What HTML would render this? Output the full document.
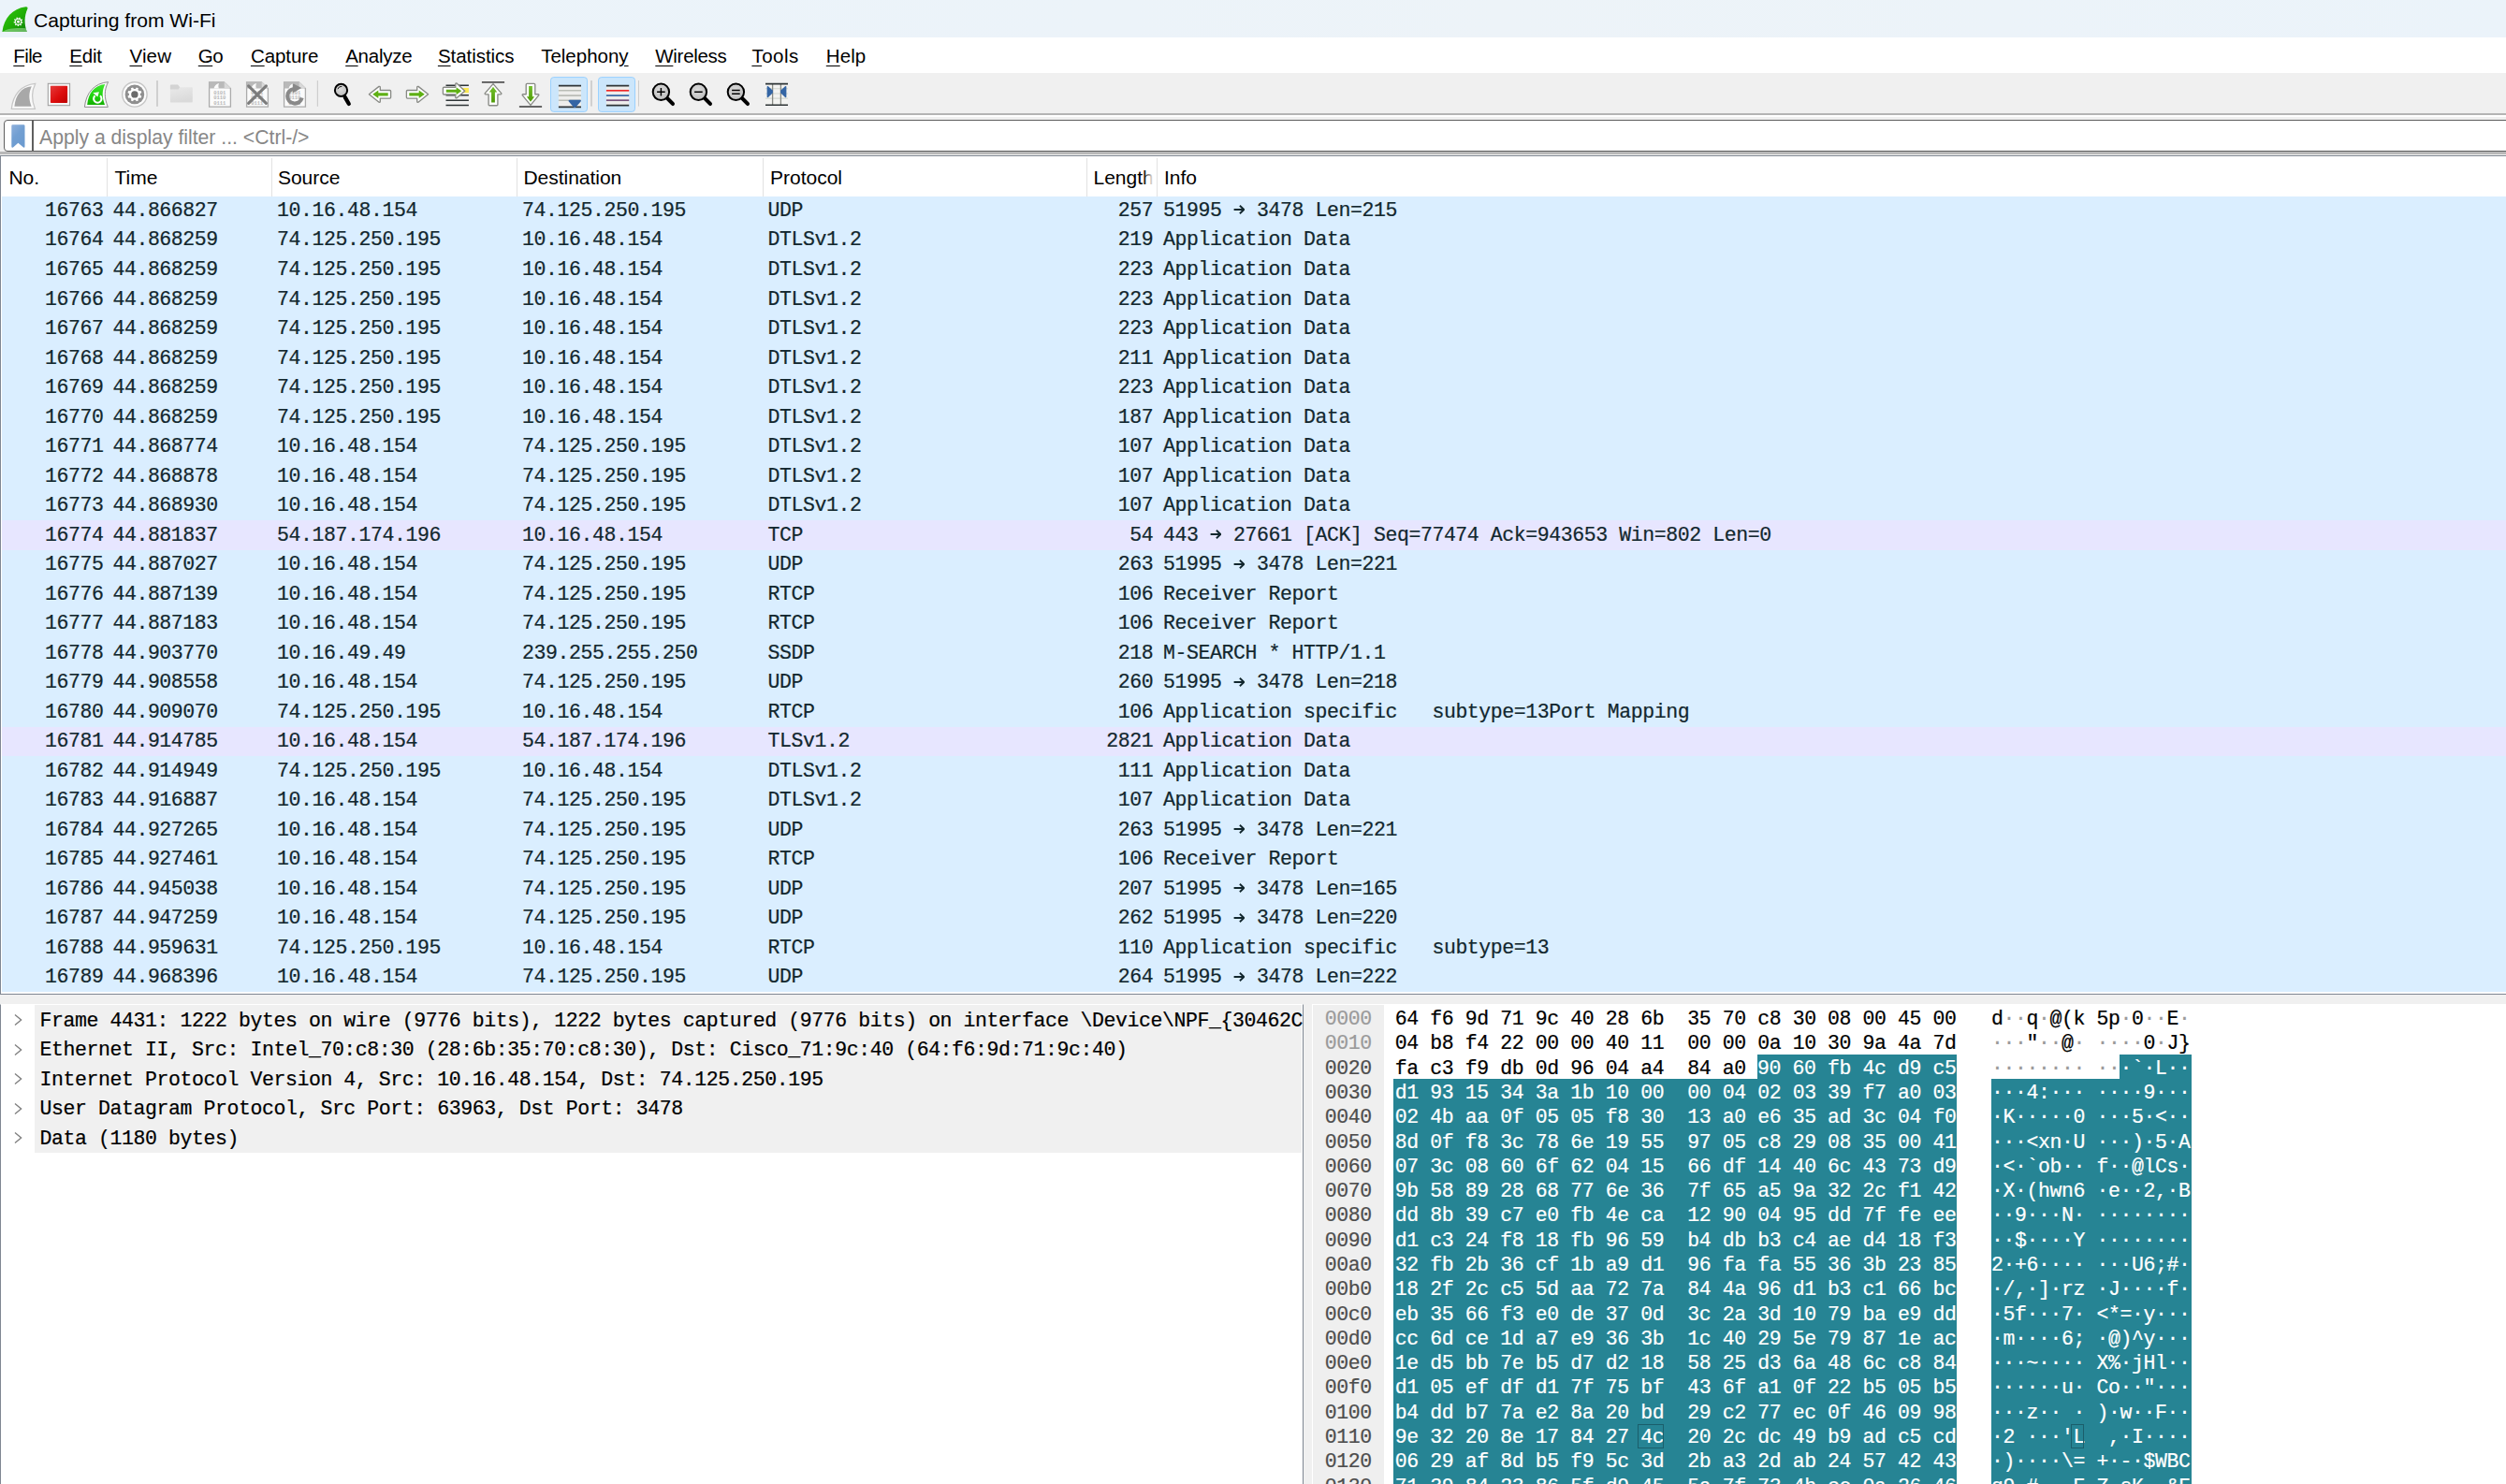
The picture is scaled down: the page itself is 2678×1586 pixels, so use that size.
<!DOCTYPE html><html><head><meta charset='utf-8'><title>Capturing from Wi-Fi</title><style>
*{box-sizing:border-box}
html,body{margin:0;padding:0}
body{width:2678px;height:1586px;overflow:hidden;background:#fff;position:relative;font-family:"Liberation Sans",sans-serif;color:#000}
.abs{position:absolute}
.mono{font-family:"Liberation Mono",monospace;font-size:21.5px;letter-spacing:-0.407px;white-space:pre;-webkit-text-stroke:0.22px}
.ui{font-family:"Liberation Sans",sans-serif;white-space:pre}
#title{left:0;top:0;width:2678px;height:40px;background:linear-gradient(90deg,#ebf3fa 0%,#ecf3f9 45%,#edf3f8 60%,#ebf3fa 100%)}
#menu{left:0;top:40px;width:2678px;height:38px;background:#fff}
#tb{left:0;top:78px;width:2678px;height:43px;background:#f0f0f0}
.mi{position:absolute;top:0.6px;height:38px;line-height:38px;font-size:20.5px;color:#000}
.mi u{text-decoration:underline;text-decoration-thickness:1.2px;text-underline-offset:2.6px}
.row{position:absolute;left:2px;width:2678px;height:31.6px;color:#12272e}
.row span{position:absolute;top:0.2px;height:31.5px;line-height:31.5px}
.udp{background:#daeeff}
.tcp{background:#e7e6ff}
.hrow{position:absolute;left:0;height:26.28px;line-height:26.28px;margin-top:1.9px}
</style></head><body>
<div id='title' class='abs'></div>
<svg class='abs' style='left:0;top:0' width='40' height='40' viewBox='0 0 40 40'><defs><linearGradient id='ag' x1='0' y1='0' x2='1' y2='1'><stop offset='0' stop-color='#35c80e'/><stop offset='0.55' stop-color='#1fae06'/><stop offset='1' stop-color='#0b7d08'/></linearGradient></defs><path d='M2.4 33.9 C4.5 19 13 9.2 27.6 7.2 Q30 7.1 29.4 9.4 C26 17 25.6 25 28.8 33.9 Z' fill='url(#ag)'/><path d='M2.4 33.9 C9 29.6 20 29.6 27.6 30.2 L28.8 33.9Z' fill='#9fd89a' opacity='0.6'/><path d='M23.20 23.17 L24.39 23.54 L24.13 24.79 L22.89 24.67 L22.36 25.55 L23.03 26.60 L22.03 27.40 L21.15 26.51 L20.18 26.84 L20.02 28.07 L18.74 28.04 L18.64 26.80 L17.68 26.42 L16.76 27.26 L15.80 26.42 L16.53 25.40 L16.04 24.50 L14.79 24.55 L14.60 23.29 L15.81 22.98 L16.01 21.97 L15.02 21.21 L15.69 20.12 L16.81 20.66 L17.62 20.01 L17.35 18.80 L18.56 18.39 L19.08 19.52 L20.11 19.55 L20.68 18.44 L21.87 18.91 L21.54 20.11 L22.31 20.80 L23.46 20.32 L24.07 21.44 L23.05 22.15Z' fill='#f4fbf2'/><circle cx='19.5' cy='23.2' r='2.55' fill='#28a018'/><circle cx='19.5' cy='23.2' r='1.45' fill='#fff'/></svg>
<div class='abs ui' style='left:36px;top:0.6px;height:40px;line-height:42px;font-size:21.1px;color:#000'>Capturing from Wi-Fi</div>
<div id='menu' class='abs'>
<div class='mi ui' style='left:14.3px;letter-spacing:-0.63px'><u>F</u>ile</div>
<div class='mi ui' style='left:74.3px;letter-spacing:-0.23px'><u>E</u>dit</div>
<div class='mi ui' style='left:138.5px;letter-spacing:0.13px'><u>V</u>iew</div>
<div class='mi ui' style='left:211.8px;letter-spacing:-0.57px'><u>G</u>o</div>
<div class='mi ui' style='left:267.9px;letter-spacing:-0.06px'><u>C</u>apture</div>
<div class='mi ui' style='left:369.2px;letter-spacing:-0.26px'><u>A</u>nalyze</div>
<div class='mi ui' style='left:467.9px;letter-spacing:-0.04px'><u>S</u>tatistics</div>
<div class='mi ui' style='left:578.2px;letter-spacing:-0.01px'>Telephon<u>y</u></div>
<div class='mi ui' style='left:700.3px;letter-spacing:-0.30px'><u>W</u>ireless</div>
<div class='mi ui' style='left:803.4px;letter-spacing:0.49px'><u>T</u>ools</div>
<div class='mi ui' style='left:882.8px;letter-spacing:0.08px'><u>H</u>elp</div>
</div>
<div id='tb' class='abs'></div>
<div class='abs' style='left:0;top:121px;width:2678px;height:2px;background:#b4b4b4'></div>
<div class='abs' style='left:0;top:123px;width:2678px;height:2.2px;background:#fff'></div>
<div class='abs' style='left:0;top:125.2px;width:2678px;height:41.3px;background:#f0f0f0'></div>
<svg class='abs' style='left:0;top:78px' width='900' height='46' viewBox='0 78 900 46'><defs>
<radialGradient id='lens' cx='0.45' cy='0.4' r='0.7'><stop offset='0' stop-color='#dcdcdc'/><stop offset='1' stop-color='#b8b8b8'/></radialGradient>
<linearGradient id='red' x1='0' y1='0' x2='1' y2='1'><stop offset='0' stop-color='#e53a3a'/><stop offset='0.55' stop-color='#dc0d0d'/><stop offset='1' stop-color='#bd0000'/></linearGradient>
<linearGradient id='grn' x1='0' y1='0' x2='0' y2='1'><stop offset='0' stop-color='#3fe52e'/><stop offset='0.6' stop-color='#1ed20c'/><stop offset='1' stop-color='#14ae02'/></linearGradient>
<linearGradient id='fold' x1='0' y1='0' x2='0.3' y2='1'><stop offset='0' stop-color='#ececec'/><stop offset='1' stop-color='#dadada'/></linearGradient>
<linearGradient id='ga' x1='0' y1='0' x2='0' y2='1'><stop offset='0' stop-color='#73c02a'/><stop offset='1' stop-color='#4e9a06'/></linearGradient>
</defs><path d='M12.30 116.40 C13.82 101.28 22.46 90.75 37.70 89.40 C33.26 98.31 33.26 106.14 37.45 116.40 Z' fill='#fafafa' stroke='#c6c6c6' stroke-width='1.2'/><path d='M15.40 113.70 C16.50 101.66 22.76 93.28 33.80 92.20 C30.58 99.30 30.58 105.53 33.62 113.70 Z' fill='#a8a8a8'/><rect x='51.3' y='89.3' width='23.3' height='23.4' fill='#f6f6f6' stroke='#9c9c9c' stroke-width='1'/><rect x='53.9' y='91.8' width='18.2' height='18.2' rx='0.8' fill='url(#red)'/><path d='M90.40 114.40 C91.91 99.39 100.48 88.94 115.60 87.60 C111.19 96.44 111.19 104.22 115.35 114.40 Z' fill='#fbfbfb' stroke='#8e8e8e' stroke-width='1'/><path d='M93.20 111.90 C94.34 99.64 100.80 91.09 112.20 90.00 C108.88 97.23 108.88 103.58 112.01 111.90 Z' fill='url(#grn)'/><path d='M107.0 102.3 A4.2 4.2 0 1 1 101.6 102.3' fill='none' stroke='#fff' stroke-width='2.1'/><path d='M99.4 99.3 L105.9 98.2 L104.3 103.4 Z' fill='#fff'/><circle cx='143.9' cy='100.9' r='13.2' fill='#fdfdfd' stroke='#c6c6c6' stroke-width='1.4'/><circle cx='143.9' cy='100.9' r='10.3' fill='#8f8f8f'/><path d='M149.83 101.84 L151.37 102.77 L150.50 104.86 L148.75 104.43 L147.43 105.75 L147.86 107.50 L145.77 108.37 L144.84 106.83 L142.96 106.83 L142.03 108.37 L139.94 107.50 L140.37 105.75 L139.05 104.43 L137.30 104.86 L136.43 102.77 L137.97 101.84 L137.97 99.96 L136.43 99.03 L137.30 96.94 L139.05 97.37 L140.37 96.05 L139.94 94.30 L142.03 93.43 L142.96 94.97 L144.84 94.97 L145.77 93.43 L147.86 94.30 L147.43 96.05 L148.75 97.37 L150.50 96.94 L151.37 99.03 L149.83 99.96Z' fill='#fff'/><circle cx='143.9' cy='100.9' r='3.7' fill='#6b6b6b'/><rect x='167' y='86.1' width='2' height='27.7' fill='#cfcfcf'/><path d='M181.9 91.4 Q181.9 90.4 182.9 90.4 H190 L192.2 93.3 H205 Q205.8 93.3 205.8 94.1 V108.7 Q205.8 109.5 205 109.5 H182.7 Q181.9 109.5 181.9 108.7 Z' fill='url(#fold)'/><path d='M181.9 91.4 Q181.9 90.4 182.9 90.4 H190 L192.2 93.3 L190.5 95.4 H181.9 Z' fill='#d3d3d3'/><path d='M223.6 87.8 H239.5 L246.4 94.6 V114.2 H223.6 Z' fill='#fbfbfb' stroke='#ababab' stroke-width='1.3'/><path d='M223.5 87.7 H239.5 L246.5 94.6 H223.5 Z' fill='#b9b9b9'/><path d='M239.7 87.6 V94.2 H246.6 Z' fill='#d9d9d9'/><path d='M228.5 94.6 C229.3 91.5 231 89.6 234 88.9 C233.2 91 233.2 92.8 233.9 94.6 Z' fill='#fbfbfb'/><text x='228.2' y='101.2' font-family='Liberation Mono, monospace' font-size='5.5' font-weight='bold' fill='#b9b9b9' textLength='13.2'>0101</text><text x='228.2' y='106.3' font-family='Liberation Mono, monospace' font-size='5.5' font-weight='bold' fill='#b9b9b9' textLength='13.2'>0110</text><text x='228.2' y='111.5' font-family='Liberation Mono, monospace' font-size='5.5' font-weight='bold' fill='#b9b9b9' textLength='13.2'>0111</text><path d='M263.6 87.8 H279.5 L286.4 94.6 V114.2 H263.6 Z' fill='#fbfbfb' stroke='#ababab' stroke-width='1.3'/><path d='M263.5 87.7 H279.5 L286.5 94.6 H263.5 Z' fill='#b9b9b9'/><path d='M279.7 87.6 V94.2 H286.6 Z' fill='#d9d9d9'/><path d='M268.5 94.6 C269.3 91.5 271 89.6 274 88.9 C273.2 91 273.2 92.8 273.9 94.6 Z' fill='#fbfbfb'/><text x='268.2' y='101.2' font-family='Liberation Mono, monospace' font-size='5.5' font-weight='bold' fill='#b9b9b9' textLength='13.2'>0101</text><text x='268.2' y='106.3' font-family='Liberation Mono, monospace' font-size='5.5' font-weight='bold' fill='#b9b9b9' textLength='13.2'>0110</text><text x='268.2' y='111.5' font-family='Liberation Mono, monospace' font-size='5.5' font-weight='bold' fill='#b9b9b9' textLength='13.2'>0111</text><path d='M265.6 91.8 L284.4 110.4 M284.4 91.8 L265.6 110.4' stroke='#7c7c7c' stroke-width='3.1' stroke-linecap='round'/><path d='M303.6 87.8 H319.5 L326.4 94.6 V114.2 H303.6 Z' fill='#fbfbfb' stroke='#ababab' stroke-width='1.3'/><path d='M303.5 87.7 H319.5 L326.5 94.6 H303.5 Z' fill='#b9b9b9'/><path d='M319.7 87.6 V94.2 H326.6 Z' fill='#d9d9d9'/><path d='M308.5 94.6 C309.3 91.5 311 89.6 314 88.9 C313.2 91 313.2 92.8 313.9 94.6 Z' fill='#fbfbfb'/><text x='308.2' y='101.2' font-family='Liberation Mono, monospace' font-size='5.5' font-weight='bold' fill='#b9b9b9' textLength='13.2'>0101</text><text x='308.2' y='106.3' font-family='Liberation Mono, monospace' font-size='5.5' font-weight='bold' fill='#b9b9b9' textLength='13.2'>0110</text><text x='308.2' y='111.5' font-family='Liberation Mono, monospace' font-size='5.5' font-weight='bold' fill='#b9b9b9' textLength='13.2'>0111</text><path d='M314.2 95.0 A7.8 7.8 0 1 0 322.6 104.6' fill='none' stroke='#898989' stroke-width='4.2'/><path d='M312.8 88.9 L322.2 93.9 L312.8 99.4 Z' fill='#898989'/><rect x='338.8' y='86.1' width='1.1' height='27.7' fill='#cacaca'/><line x1='368.7' y1='103.9' x2='372.8' y2='111.0' stroke='#000' stroke-width='4.2' stroke-linecap='round'/><circle cx='364.5' cy='96.4' r='6.6' fill='url(#lens)' stroke='#000' stroke-width='2'/><path d='M360.9 95.2 A4.2 4.2 0 0 1 365.3 92.4' stroke='#000' stroke-width='0.9' fill='none'/><path d='M394.4 100.8 L405 92.4 Q406.3 92 406.3 93.4 V96.5 H416.6 Q417.6 96.5 417.6 97.5 V104.1 Q417.6 105.1 416.6 105.1 H406.3 V108.2 Q406.3 109.6 405 109.2 Z' fill='#fff' stroke='#888a85' stroke-width='1.35' stroke-linejoin='round'/><path d='M398.2 100.8 L404.3 96.6 V99.2 H414.7 V102.5 H404.3 V105.0 Z' fill='#5fb014'/><path d='M457.6 100.8 L447 92.4 Q445.7 92 445.7 93.4 V96.5 H435.4 Q434.4 96.5 434.4 97.5 V104.1 Q434.4 105.1 435.4 105.1 H445.7 V108.2 Q445.7 109.6 447 109.2 Z' fill='#fff' stroke='#888a85' stroke-width='1.35' stroke-linejoin='round'/><path d='M453.8 100.8 L447.7 96.6 V99.2 H437.3 V102.5 H447.7 V105.0 Z' fill='#5fb014'/><g stroke='#2e3436' stroke-width='1.6'><path d='M476.5 91.3H500.9M476.5 101.8H500.9M476.5 107.2H500.9M476.5 112.5H500.9'/></g><rect x='493' y='94' width='7.9' height='5.2' fill='#fce94f'/><path d='M496.7 97.2 L488 89.0 Q486.8 88.6 486.8 89.9 V93.2 H474.4 Q473.4 93.2 473.4 94.2 V100.0 Q473.4 101.0 474.4 101.0 H486.8 V104.0 Q486.8 105.2 488 104.8 Z' fill='#fff' stroke='#888a85' stroke-width='1.35' stroke-linejoin='round'/><path d='M493.2 97.2 L487.6 93.2 V95.7 H476.8 V98.8 H487.6 V101.2 Z' fill='#5fb014'/><path d='M514.9 87.9H539.1' stroke='#444' stroke-width='1.6'/><path d='M527 89.6 L535.7 99.6 Q536.2 100.8 535 100.8 H531.9 V111.7 Q531.9 112.7 530.9 112.7 H523.1 Q522.1 112.7 522.1 111.7 V100.8 H519 Q517.8 100.8 518.3 99.6 Z' fill='#fff' stroke='#888a85' stroke-width='1.35' stroke-linejoin='round'/><path d='M527 92.8 L531.2 98.6 H528.9 V109.5 H525.1 V98.6 H522.8 Z' fill='url(#ga)'/><path d='M554.9 114H579.1' stroke='#444' stroke-width='1.6'/><path d='M567 112.4 L575.7 101.9 Q576.2 100.7 575 100.7 H571.8 V90.4 Q571.8 89.4 570.8 89.4 H563.2 Q562.2 89.4 562.2 90.4 V100.7 H559 Q557.8 100.7 558.3 101.9 Z' fill='#fff' stroke='#888a85' stroke-width='1.35' stroke-linejoin='round'/><path d='M567 108.8 L571.2 103.3 H568.9 V92 H565.1 V103.3 H562.8 Z' fill='url(#ga)'/><rect x='588.5' y='82.6' width='39' height='36.8' rx='3.2' fill='#cce6fb' stroke='#99d1ff' stroke-width='1'/><rect x='596.9' y='91.6' width='24.1' height='22.8' fill='#eeeeec'/><g stroke-width='1.6'><path d='M596.9 91.6H621M596.9 114.4H621' stroke='#2e3436'/><path d='M596.9 96.8H621M596.9 102.1H621M596.9 107.2H621' stroke='#babdb6'/></g><path d='M608.6 106.8 H619.8 Q621.6 106.8 620.6 108.4 L615.4 114.4 Q614.2 115.4 613 114.4 L607.8 108.4 Q606.8 106.8 608.6 106.8Z' fill='#3465a4'/><rect x='631.1' y='86' width='1.8' height='27.6' fill='#cdcdcd'/><rect x='639.5' y='82.6' width='39' height='36.8' rx='3.2' fill='#cce6fb' stroke='#99d1ff' stroke-width='1'/><rect x='647.9' y='91.6' width='24.3' height='21.1' fill='#eeeeec'/><g stroke-width='1.7'><path d='M647.9 91.6H672.2M647.9 112.7H672.2' stroke='#2e3436'/><path d='M647.9 96.8H672.2' stroke='#ef2929'/><path d='M647.9 102.1H672.2' stroke='#3465a4'/><path d='M647.9 107.2H672.2' stroke='#75507b'/></g><rect x='682' y='86' width='1' height='27.6' fill='#cdcdcd'/><line x1='713.2' y1='105.1' x2='718.9' y2='110.9' stroke='#000' stroke-width='4.2' stroke-linecap='round'/><circle cx='706.4' cy='98.3' r='8.7' fill='url(#lens)' stroke='#000' stroke-width='2'/><path d='M702.1 98.3H710.6999999999999M706.4 94.0V102.6' stroke='#000' stroke-width='1.5'/><line x1='753.2' y1='105.1' x2='758.9' y2='110.9' stroke='#000' stroke-width='4.2' stroke-linecap='round'/><circle cx='746.4' cy='98.3' r='8.7' fill='url(#lens)' stroke='#000' stroke-width='2'/><path d='M742.1 98.3H750.6999999999999' stroke='#000' stroke-width='1.5'/><line x1='793.2' y1='105.1' x2='798.9' y2='110.9' stroke='#000' stroke-width='4.2' stroke-linecap='round'/><circle cx='786.4' cy='98.3' r='8.7' fill='url(#lens)' stroke='#000' stroke-width='2'/><path d='M782.1 96.39999999999999H790.6999999999999M782.1 100.2H790.6999999999999' stroke='#000' stroke-width='1.5'/><rect x='818' y='89.6' width='24' height='22.7' fill='#f3f3f1'/><g stroke='#d3d7cf' stroke-width='1.1'><path d='M818 94.8H842M818 100H842M818 105.1H842'/></g><g stroke='#888a85' stroke-width='1.3'><path d='M825.6 89.6V112.3M834.4 89.6V112.3'/></g><g stroke='#2e3436' stroke-width='1.6'><path d='M818 89.6H842M818 112.3H842'/></g><path d='M819.6 93 Q819.6 91.6 821 92.2 L825.6 96.6 Q826.4 98.1 825.6 99.6 L821 104 Q819.6 104.6 819.6 103.2 Z' fill='#3465a4'/><path d='M840.4 93 Q840.4 91.6 839 92.2 L834.4 96.6 Q833.6 98.1 834.4 99.6 L839 104 Q840.4 104.6 840.4 103.2 Z' fill='#3465a4'/></svg>
<div class='abs' style='left:4px;top:128px;width:2700px;height:34px;background:#fff;border:1.2px solid #5f5f5f;border-radius:4px 0 0 4px'></div>
<div class='abs' style='left:34.2px;top:128px;width:1.5px;height:34px;background:#5f5f5f'></div>
<svg class='abs' style='left:12px;top:133px' width='15' height='25' viewBox='0 0 15 25'><defs><linearGradient id='bk' x1='0' y1='0' x2='0.6' y2='1'><stop offset='0' stop-color='#8eb0dc'/><stop offset='0.5' stop-color='#729fd2'/><stop offset='1' stop-color='#6c9bd0'/></linearGradient></defs><path d='M1.5 0.3 H13.2 Q14.5 0.3 14.5 1.6 V23.5 Q14.5 25 13 24.6 L7.4 19.8 L2 24.6 Q0.3 25 0.3 23.5 V1.6 Q0.3 0.3 1.5 0.3Z' fill='url(#bk)'/></svg>
<div class='abs ui' style='left:42px;top:130.2px;height:33px;line-height:34px;font-size:21.2px;color:#878787'>Apply a display filter ... &lt;Ctrl-/&gt;</div>
<div class='abs' style='left:0;top:162px;width:2678px;height:2.8px;background:#b8b8b8'></div>
<div class='abs' style='left:0;top:166px;width:2700px;height:897px;border:1px solid #7f8792;background:#fff'></div>
<div class='abs ui' style='left:9.4px;top:167px;height:43px;line-height:45px;font-size:21px;letter-spacing:0.00px'>No.</div>
<div class='abs ui' style='left:122.5px;top:167px;height:43px;line-height:45px;font-size:21px;letter-spacing:0.00px'>Time</div>
<div class='abs ui' style='left:296.9px;top:167px;height:43px;line-height:45px;font-size:21px;letter-spacing:0.00px'>Source</div>
<div class='abs ui' style='left:559.4px;top:167px;height:43px;line-height:45px;font-size:21px;letter-spacing:-0.02px'>Destination</div>
<div class='abs ui' style='left:823.0px;top:167px;height:43px;line-height:45px;font-size:21px;letter-spacing:-0.01px'>Protocol</div>
<div class='abs ui' style='left:1168.5px;top:167px;height:43px;line-height:45px;font-size:21px;letter-spacing:0.00px'>Length</div>
<div class='abs ui' style='left:1243.9px;top:167px;height:43px;line-height:45px;font-size:21px;letter-spacing:0.00px'>Info</div>
<div class='abs' style='left:114.3px;top:169px;width:1px;height:41px;background:#e2e2e2'></div>
<div class='abs' style='left:289.7px;top:169px;width:1px;height:41px;background:#e2e2e2'></div>
<div class='abs' style='left:551.7px;top:169px;width:1px;height:41px;background:#e2e2e2'></div>
<div class='abs' style='left:814.8px;top:169px;width:1px;height:41px;background:#e2e2e2'></div>
<div class='abs' style='left:1160.8px;top:169px;width:1px;height:41px;background:#e2e2e2'></div>
<div class='abs' style='left:1236.0px;top:169px;width:1px;height:41px;background:#e2e2e2'></div>
<div class='abs' style='left:1222px;top:170px;width:13.8px;height:38px;background:linear-gradient(90deg,rgba(255,255,255,0),#fff 75%)'></div>
<div class='row mono udp' style='top:209.80px'><span style='left:0;width:108.6px;text-align:right'>16763</span><span style='left:118.4px'>44.866827</span><span style='left:294px'>10.16.48.154</span><span style='left:556px'>74.125.250.195</span><span style='left:818.6px'>UDP</span><span style='left:1099px;width:131.2px;text-align:right'>257</span><span style='left:1241px'>51995 <svg style='display:inline-block;width:12.495px;height:12px;vertical-align:0.6px;letter-spacing:0' viewBox='0 0 12.5 12'><path d='M0.6 6H11.2M6.9 1.7L11.4 6L6.9 10.3' fill='none' stroke='#12272e' stroke-width='1.9' stroke-linejoin='miter'/></svg> 3478 Len=215</span></div>
<div class='row mono udp' style='top:241.31px'><span style='left:0;width:108.6px;text-align:right'>16764</span><span style='left:118.4px'>44.868259</span><span style='left:294px'>74.125.250.195</span><span style='left:556px'>10.16.48.154</span><span style='left:818.6px'>DTLSv1.2</span><span style='left:1099px;width:131.2px;text-align:right'>219</span><span style='left:1241px'>Application Data</span></div>
<div class='row mono udp' style='top:272.82px'><span style='left:0;width:108.6px;text-align:right'>16765</span><span style='left:118.4px'>44.868259</span><span style='left:294px'>74.125.250.195</span><span style='left:556px'>10.16.48.154</span><span style='left:818.6px'>DTLSv1.2</span><span style='left:1099px;width:131.2px;text-align:right'>223</span><span style='left:1241px'>Application Data</span></div>
<div class='row mono udp' style='top:304.33px'><span style='left:0;width:108.6px;text-align:right'>16766</span><span style='left:118.4px'>44.868259</span><span style='left:294px'>74.125.250.195</span><span style='left:556px'>10.16.48.154</span><span style='left:818.6px'>DTLSv1.2</span><span style='left:1099px;width:131.2px;text-align:right'>223</span><span style='left:1241px'>Application Data</span></div>
<div class='row mono udp' style='top:335.84px'><span style='left:0;width:108.6px;text-align:right'>16767</span><span style='left:118.4px'>44.868259</span><span style='left:294px'>74.125.250.195</span><span style='left:556px'>10.16.48.154</span><span style='left:818.6px'>DTLSv1.2</span><span style='left:1099px;width:131.2px;text-align:right'>223</span><span style='left:1241px'>Application Data</span></div>
<div class='row mono udp' style='top:367.35px'><span style='left:0;width:108.6px;text-align:right'>16768</span><span style='left:118.4px'>44.868259</span><span style='left:294px'>74.125.250.195</span><span style='left:556px'>10.16.48.154</span><span style='left:818.6px'>DTLSv1.2</span><span style='left:1099px;width:131.2px;text-align:right'>211</span><span style='left:1241px'>Application Data</span></div>
<div class='row mono udp' style='top:398.86px'><span style='left:0;width:108.6px;text-align:right'>16769</span><span style='left:118.4px'>44.868259</span><span style='left:294px'>74.125.250.195</span><span style='left:556px'>10.16.48.154</span><span style='left:818.6px'>DTLSv1.2</span><span style='left:1099px;width:131.2px;text-align:right'>223</span><span style='left:1241px'>Application Data</span></div>
<div class='row mono udp' style='top:430.37px'><span style='left:0;width:108.6px;text-align:right'>16770</span><span style='left:118.4px'>44.868259</span><span style='left:294px'>74.125.250.195</span><span style='left:556px'>10.16.48.154</span><span style='left:818.6px'>DTLSv1.2</span><span style='left:1099px;width:131.2px;text-align:right'>187</span><span style='left:1241px'>Application Data</span></div>
<div class='row mono udp' style='top:461.88px'><span style='left:0;width:108.6px;text-align:right'>16771</span><span style='left:118.4px'>44.868774</span><span style='left:294px'>10.16.48.154</span><span style='left:556px'>74.125.250.195</span><span style='left:818.6px'>DTLSv1.2</span><span style='left:1099px;width:131.2px;text-align:right'>107</span><span style='left:1241px'>Application Data</span></div>
<div class='row mono udp' style='top:493.39px'><span style='left:0;width:108.6px;text-align:right'>16772</span><span style='left:118.4px'>44.868878</span><span style='left:294px'>10.16.48.154</span><span style='left:556px'>74.125.250.195</span><span style='left:818.6px'>DTLSv1.2</span><span style='left:1099px;width:131.2px;text-align:right'>107</span><span style='left:1241px'>Application Data</span></div>
<div class='row mono udp' style='top:524.90px'><span style='left:0;width:108.6px;text-align:right'>16773</span><span style='left:118.4px'>44.868930</span><span style='left:294px'>10.16.48.154</span><span style='left:556px'>74.125.250.195</span><span style='left:818.6px'>DTLSv1.2</span><span style='left:1099px;width:131.2px;text-align:right'>107</span><span style='left:1241px'>Application Data</span></div>
<div class='row mono tcp' style='top:556.41px'><span style='left:0;width:108.6px;text-align:right'>16774</span><span style='left:118.4px'>44.881837</span><span style='left:294px'>54.187.174.196</span><span style='left:556px'>10.16.48.154</span><span style='left:818.6px'>TCP</span><span style='left:1099px;width:131.2px;text-align:right'>54</span><span style='left:1241px'>443 <svg style='display:inline-block;width:12.495px;height:12px;vertical-align:0.6px;letter-spacing:0' viewBox='0 0 12.5 12'><path d='M0.6 6H11.2M6.9 1.7L11.4 6L6.9 10.3' fill='none' stroke='#12272e' stroke-width='1.9' stroke-linejoin='miter'/></svg> 27661 [ACK] Seq=77474 Ack=943653 Win=802 Len=0</span></div>
<div class='row mono udp' style='top:587.92px'><span style='left:0;width:108.6px;text-align:right'>16775</span><span style='left:118.4px'>44.887027</span><span style='left:294px'>10.16.48.154</span><span style='left:556px'>74.125.250.195</span><span style='left:818.6px'>UDP</span><span style='left:1099px;width:131.2px;text-align:right'>263</span><span style='left:1241px'>51995 <svg style='display:inline-block;width:12.495px;height:12px;vertical-align:0.6px;letter-spacing:0' viewBox='0 0 12.5 12'><path d='M0.6 6H11.2M6.9 1.7L11.4 6L6.9 10.3' fill='none' stroke='#12272e' stroke-width='1.9' stroke-linejoin='miter'/></svg> 3478 Len=221</span></div>
<div class='row mono udp' style='top:619.43px'><span style='left:0;width:108.6px;text-align:right'>16776</span><span style='left:118.4px'>44.887139</span><span style='left:294px'>10.16.48.154</span><span style='left:556px'>74.125.250.195</span><span style='left:818.6px'>RTCP</span><span style='left:1099px;width:131.2px;text-align:right'>106</span><span style='left:1241px'>Receiver Report</span></div>
<div class='row mono udp' style='top:650.94px'><span style='left:0;width:108.6px;text-align:right'>16777</span><span style='left:118.4px'>44.887183</span><span style='left:294px'>10.16.48.154</span><span style='left:556px'>74.125.250.195</span><span style='left:818.6px'>RTCP</span><span style='left:1099px;width:131.2px;text-align:right'>106</span><span style='left:1241px'>Receiver Report</span></div>
<div class='row mono udp' style='top:682.45px'><span style='left:0;width:108.6px;text-align:right'>16778</span><span style='left:118.4px'>44.903770</span><span style='left:294px'>10.16.49.49</span><span style='left:556px'>239.255.255.250</span><span style='left:818.6px'>SSDP</span><span style='left:1099px;width:131.2px;text-align:right'>218</span><span style='left:1241px'>M-SEARCH * HTTP/1.1</span></div>
<div class='row mono udp' style='top:713.96px'><span style='left:0;width:108.6px;text-align:right'>16779</span><span style='left:118.4px'>44.908558</span><span style='left:294px'>10.16.48.154</span><span style='left:556px'>74.125.250.195</span><span style='left:818.6px'>UDP</span><span style='left:1099px;width:131.2px;text-align:right'>260</span><span style='left:1241px'>51995 <svg style='display:inline-block;width:12.495px;height:12px;vertical-align:0.6px;letter-spacing:0' viewBox='0 0 12.5 12'><path d='M0.6 6H11.2M6.9 1.7L11.4 6L6.9 10.3' fill='none' stroke='#12272e' stroke-width='1.9' stroke-linejoin='miter'/></svg> 3478 Len=218</span></div>
<div class='row mono udp' style='top:745.47px'><span style='left:0;width:108.6px;text-align:right'>16780</span><span style='left:118.4px'>44.909070</span><span style='left:294px'>74.125.250.195</span><span style='left:556px'>10.16.48.154</span><span style='left:818.6px'>RTCP</span><span style='left:1099px;width:131.2px;text-align:right'>106</span><span style='left:1241px'>Application specific   subtype=13Port Mapping</span></div>
<div class='row mono tcp' style='top:776.98px'><span style='left:0;width:108.6px;text-align:right'>16781</span><span style='left:118.4px'>44.914785</span><span style='left:294px'>10.16.48.154</span><span style='left:556px'>54.187.174.196</span><span style='left:818.6px'>TLSv1.2</span><span style='left:1099px;width:131.2px;text-align:right'>2821</span><span style='left:1241px'>Application Data</span></div>
<div class='row mono udp' style='top:808.49px'><span style='left:0;width:108.6px;text-align:right'>16782</span><span style='left:118.4px'>44.914949</span><span style='left:294px'>74.125.250.195</span><span style='left:556px'>10.16.48.154</span><span style='left:818.6px'>DTLSv1.2</span><span style='left:1099px;width:131.2px;text-align:right'>111</span><span style='left:1241px'>Application Data</span></div>
<div class='row mono udp' style='top:840.00px'><span style='left:0;width:108.6px;text-align:right'>16783</span><span style='left:118.4px'>44.916887</span><span style='left:294px'>10.16.48.154</span><span style='left:556px'>74.125.250.195</span><span style='left:818.6px'>DTLSv1.2</span><span style='left:1099px;width:131.2px;text-align:right'>107</span><span style='left:1241px'>Application Data</span></div>
<div class='row mono udp' style='top:871.51px'><span style='left:0;width:108.6px;text-align:right'>16784</span><span style='left:118.4px'>44.927265</span><span style='left:294px'>10.16.48.154</span><span style='left:556px'>74.125.250.195</span><span style='left:818.6px'>UDP</span><span style='left:1099px;width:131.2px;text-align:right'>263</span><span style='left:1241px'>51995 <svg style='display:inline-block;width:12.495px;height:12px;vertical-align:0.6px;letter-spacing:0' viewBox='0 0 12.5 12'><path d='M0.6 6H11.2M6.9 1.7L11.4 6L6.9 10.3' fill='none' stroke='#12272e' stroke-width='1.9' stroke-linejoin='miter'/></svg> 3478 Len=221</span></div>
<div class='row mono udp' style='top:903.02px'><span style='left:0;width:108.6px;text-align:right'>16785</span><span style='left:118.4px'>44.927461</span><span style='left:294px'>10.16.48.154</span><span style='left:556px'>74.125.250.195</span><span style='left:818.6px'>RTCP</span><span style='left:1099px;width:131.2px;text-align:right'>106</span><span style='left:1241px'>Receiver Report</span></div>
<div class='row mono udp' style='top:934.53px'><span style='left:0;width:108.6px;text-align:right'>16786</span><span style='left:118.4px'>44.945038</span><span style='left:294px'>10.16.48.154</span><span style='left:556px'>74.125.250.195</span><span style='left:818.6px'>UDP</span><span style='left:1099px;width:131.2px;text-align:right'>207</span><span style='left:1241px'>51995 <svg style='display:inline-block;width:12.495px;height:12px;vertical-align:0.6px;letter-spacing:0' viewBox='0 0 12.5 12'><path d='M0.6 6H11.2M6.9 1.7L11.4 6L6.9 10.3' fill='none' stroke='#12272e' stroke-width='1.9' stroke-linejoin='miter'/></svg> 3478 Len=165</span></div>
<div class='row mono udp' style='top:966.04px'><span style='left:0;width:108.6px;text-align:right'>16787</span><span style='left:118.4px'>44.947259</span><span style='left:294px'>10.16.48.154</span><span style='left:556px'>74.125.250.195</span><span style='left:818.6px'>UDP</span><span style='left:1099px;width:131.2px;text-align:right'>262</span><span style='left:1241px'>51995 <svg style='display:inline-block;width:12.495px;height:12px;vertical-align:0.6px;letter-spacing:0' viewBox='0 0 12.5 12'><path d='M0.6 6H11.2M6.9 1.7L11.4 6L6.9 10.3' fill='none' stroke='#12272e' stroke-width='1.9' stroke-linejoin='miter'/></svg> 3478 Len=220</span></div>
<div class='row mono udp' style='top:997.55px'><span style='left:0;width:108.6px;text-align:right'>16788</span><span style='left:118.4px'>44.959631</span><span style='left:294px'>74.125.250.195</span><span style='left:556px'>10.16.48.154</span><span style='left:818.6px'>RTCP</span><span style='left:1099px;width:131.2px;text-align:right'>110</span><span style='left:1241px'>Application specific   subtype=13</span></div>
<div class='row mono udp' style='top:1029.06px'><span style='left:0;width:108.6px;text-align:right'>16789</span><span style='left:118.4px'>44.968396</span><span style='left:294px'>10.16.48.154</span><span style='left:556px'>74.125.250.195</span><span style='left:818.6px'>UDP</span><span style='left:1099px;width:131.2px;text-align:right'>264</span><span style='left:1241px'>51995 <svg style='display:inline-block;width:12.495px;height:12px;vertical-align:0.6px;letter-spacing:0' viewBox='0 0 12.5 12'><path d='M0.6 6H11.2M6.9 1.7L11.4 6L6.9 10.3' fill='none' stroke='#12272e' stroke-width='1.9' stroke-linejoin='miter'/></svg> 3478 Len=222</span></div>
<div class='abs' style='left:1px;top:1059.8px;width:2700px;height:2.2px;background:#fff'></div>
<div class='abs' style='left:0;top:1063px;width:2678px;height:10.3px;background:#f0f0f0'></div>
<div class='abs' style='left:0;top:1073.2px;width:1393px;height:600px;border:1px solid #7f8792;border-top:1px solid #fff;background:#fff;overflow:hidden'>
<div class='abs' style='left:36.1px;top:0;width:1354px;height:157.4px;background:#f0f0f0'></div>
<svg class='abs' style='left:11.6px;top:8.3px' width='14' height='16' viewBox='0 0 14 16'><path d='M3 2.5 L9.6 8 L3 13.5' fill='none' stroke='#7e7e7e' stroke-width='1.35'/></svg>
<div class='abs mono' style='left:41.5px;top:1.4px;height:31.51px;line-height:31.51px;color:#000'>Frame 4431: 1222 bytes on wire (9776 bits), 1222 bytes captured (9776 bits) on interface \Device\NPF_{30462C9E-</div>
<svg class='abs' style='left:11.6px;top:39.8px' width='14' height='16' viewBox='0 0 14 16'><path d='M3 2.5 L9.6 8 L3 13.5' fill='none' stroke='#7e7e7e' stroke-width='1.35'/></svg>
<div class='abs mono' style='left:41.5px;top:32.9px;height:31.51px;line-height:31.51px;color:#000'>Ethernet II, Src: Intel_70:c8:30 (28:6b:35:70:c8:30), Dst: Cisco_71:9c:40 (64:f6:9d:71:9c:40)</div>
<svg class='abs' style='left:11.6px;top:71.3px' width='14' height='16' viewBox='0 0 14 16'><path d='M3 2.5 L9.6 8 L3 13.5' fill='none' stroke='#7e7e7e' stroke-width='1.35'/></svg>
<div class='abs mono' style='left:41.5px;top:64.4px;height:31.51px;line-height:31.51px;color:#000'>Internet Protocol Version 4, Src: 10.16.48.154, Dst: 74.125.250.195</div>
<svg class='abs' style='left:11.6px;top:102.8px' width='14' height='16' viewBox='0 0 14 16'><path d='M3 2.5 L9.6 8 L3 13.5' fill='none' stroke='#7e7e7e' stroke-width='1.35'/></svg>
<div class='abs mono' style='left:41.5px;top:95.9px;height:31.51px;line-height:31.51px;color:#000'>User Datagram Protocol, Src Port: 63963, Dst Port: 3478</div>
<svg class='abs' style='left:11.6px;top:134.3px' width='14' height='16' viewBox='0 0 14 16'><path d='M3 2.5 L9.6 8 L3 13.5' fill='none' stroke='#7e7e7e' stroke-width='1.35'/></svg>
<div class='abs mono' style='left:41.5px;top:127.4px;height:31.51px;line-height:31.51px;color:#000'>Data (1180 bytes)</div>
</div>
<div class='abs' style='left:1393px;top:1073px;width:9.1px;height:600px;background:#f0f0f0'></div>
<div class='abs' style='left:1402px;top:1073.2px;width:1400px;height:600px;background:#fff'></div>
<div class='abs' style='left:1403px;top:1074.2px;width:76px;height:600px;background:#efefef'></div>
<div class='hrow mono' style='left:1415.8px;top:1074.30px;color:#9a9a9a'>0000</div>
<div class='hrow mono' style='left:1490.8px;top:1074.30px;color:#000'>64 f6 9d 71 9c 40 28 6b  35 70 c8 30 08 00 45 00</div>
<div class='hrow mono' style='left:2128.0px;top:1074.30px'><span style='color:#000'>d</span><span style='color:#9a9a9a'>·</span><span style='color:#9a9a9a'>·</span><span style='color:#000'>q</span><span style='color:#9a9a9a'>·</span><span style='color:#000'>@</span><span style='color:#000'>(</span><span style='color:#000'>k</span> <span style='color:#000'>5</span><span style='color:#000'>p</span><span style='color:#9a9a9a'>·</span><span style='color:#000'>0</span><span style='color:#9a9a9a'>·</span><span style='color:#9a9a9a'>·</span><span style='color:#000'>E</span><span style='color:#9a9a9a'>·</span></div>
<div class='hrow mono' style='left:1415.8px;top:1100.58px;color:#9a9a9a'>0010</div>
<div class='hrow mono' style='left:1490.8px;top:1100.58px;color:#000'>04 b8 f4 22 00 00 40 11  00 00 0a 10 30 9a 4a 7d</div>
<div class='hrow mono' style='left:2128.0px;top:1100.58px'><span style='color:#9a9a9a'>·</span><span style='color:#9a9a9a'>·</span><span style='color:#9a9a9a'>·</span><span style='color:#000'>"</span><span style='color:#9a9a9a'>·</span><span style='color:#9a9a9a'>·</span><span style='color:#000'>@</span><span style='color:#9a9a9a'>·</span> <span style='color:#9a9a9a'>·</span><span style='color:#9a9a9a'>·</span><span style='color:#9a9a9a'>·</span><span style='color:#9a9a9a'>·</span><span style='color:#000'>0</span><span style='color:#9a9a9a'>·</span><span style='color:#000'>J</span><span style='color:#000'>}</span></div>
<div class='abs' style='left:1877.8px;top:1126.86px;width:213.0px;height:26.68px;background:#268494'></div>
<div class='abs' style='left:2265.3px;top:1126.86px;width:76.8px;height:26.68px;background:#268494'></div>
<div class='hrow mono' style='left:1415.8px;top:1126.86px;color:#4d4d4d'>0020</div>
<div class='hrow mono' style='left:1490.8px;top:1126.86px;color:#000'>fa c3 f9 db 0d 96 04 a4  84 a0 </div>
<div class='hrow mono' style='left:1878.1px;top:1126.86px;color:#fff'>90 60 fb 4c d9 c5</div>
<div class='hrow mono' style='left:2128.0px;top:1126.86px'><span style='color:#9a9a9a'>·</span><span style='color:#9a9a9a'>·</span><span style='color:#9a9a9a'>·</span><span style='color:#9a9a9a'>·</span><span style='color:#9a9a9a'>·</span><span style='color:#9a9a9a'>·</span><span style='color:#9a9a9a'>·</span><span style='color:#9a9a9a'>·</span> <span style='color:#9a9a9a'>·</span><span style='color:#9a9a9a'>·</span><span style='color:#fff'>·</span><span style='color:#fff'>`</span><span style='color:#fff'>·</span><span style='color:#fff'>L</span><span style='color:#fff'>·</span><span style='color:#fff'>·</span></div>
<div class='abs' style='left:1489.0px;top:1153.14px;width:601.9px;height:26.68px;background:#268494'></div>
<div class='abs' style='left:2127.8px;top:1153.14px;width:214.2px;height:26.68px;background:#268494'></div>
<div class='hrow mono' style='left:1415.8px;top:1153.14px;color:#4d4d4d'>0030</div>
<div class='hrow mono' style='left:1490.8px;top:1153.14px;color:#fff'>d1 93 15 34 3a 1b 10 00  00 04 02 03 39 f7 a0 03</div>
<div class='hrow mono' style='left:2128.0px;top:1153.14px'><span style='color:#fff'>·</span><span style='color:#fff'>·</span><span style='color:#fff'>·</span><span style='color:#fff'>4</span><span style='color:#fff'>:</span><span style='color:#fff'>·</span><span style='color:#fff'>·</span><span style='color:#fff'>·</span> <span style='color:#fff'>·</span><span style='color:#fff'>·</span><span style='color:#fff'>·</span><span style='color:#fff'>·</span><span style='color:#fff'>9</span><span style='color:#fff'>·</span><span style='color:#fff'>·</span><span style='color:#fff'>·</span></div>
<div class='abs' style='left:1489.0px;top:1179.42px;width:601.9px;height:26.68px;background:#268494'></div>
<div class='abs' style='left:2127.8px;top:1179.42px;width:214.2px;height:26.68px;background:#268494'></div>
<div class='hrow mono' style='left:1415.8px;top:1179.42px;color:#4d4d4d'>0040</div>
<div class='hrow mono' style='left:1490.8px;top:1179.42px;color:#fff'>02 4b aa 0f 05 05 f8 30  13 a0 e6 35 ad 3c 04 f0</div>
<div class='hrow mono' style='left:2128.0px;top:1179.42px'><span style='color:#fff'>·</span><span style='color:#fff'>K</span><span style='color:#fff'>·</span><span style='color:#fff'>·</span><span style='color:#fff'>·</span><span style='color:#fff'>·</span><span style='color:#fff'>·</span><span style='color:#fff'>0</span> <span style='color:#fff'>·</span><span style='color:#fff'>·</span><span style='color:#fff'>·</span><span style='color:#fff'>5</span><span style='color:#fff'>·</span><span style='color:#fff'>&lt;</span><span style='color:#fff'>·</span><span style='color:#fff'>·</span></div>
<div class='abs' style='left:1489.0px;top:1205.70px;width:601.9px;height:26.68px;background:#268494'></div>
<div class='abs' style='left:2127.8px;top:1205.70px;width:214.2px;height:26.68px;background:#268494'></div>
<div class='hrow mono' style='left:1415.8px;top:1205.70px;color:#4d4d4d'>0050</div>
<div class='hrow mono' style='left:1490.8px;top:1205.70px;color:#fff'>8d 0f f8 3c 78 6e 19 55  97 05 c8 29 08 35 00 41</div>
<div class='hrow mono' style='left:2128.0px;top:1205.70px'><span style='color:#fff'>·</span><span style='color:#fff'>·</span><span style='color:#fff'>·</span><span style='color:#fff'>&lt;</span><span style='color:#fff'>x</span><span style='color:#fff'>n</span><span style='color:#fff'>·</span><span style='color:#fff'>U</span> <span style='color:#fff'>·</span><span style='color:#fff'>·</span><span style='color:#fff'>·</span><span style='color:#fff'>)</span><span style='color:#fff'>·</span><span style='color:#fff'>5</span><span style='color:#fff'>·</span><span style='color:#fff'>A</span></div>
<div class='abs' style='left:1489.0px;top:1231.98px;width:601.9px;height:26.68px;background:#268494'></div>
<div class='abs' style='left:2127.8px;top:1231.98px;width:214.2px;height:26.68px;background:#268494'></div>
<div class='hrow mono' style='left:1415.8px;top:1231.98px;color:#4d4d4d'>0060</div>
<div class='hrow mono' style='left:1490.8px;top:1231.98px;color:#fff'>07 3c 08 60 6f 62 04 15  66 df 14 40 6c 43 73 d9</div>
<div class='hrow mono' style='left:2128.0px;top:1231.98px'><span style='color:#fff'>·</span><span style='color:#fff'>&lt;</span><span style='color:#fff'>·</span><span style='color:#fff'>`</span><span style='color:#fff'>o</span><span style='color:#fff'>b</span><span style='color:#fff'>·</span><span style='color:#fff'>·</span> <span style='color:#fff'>f</span><span style='color:#fff'>·</span><span style='color:#fff'>·</span><span style='color:#fff'>@</span><span style='color:#fff'>l</span><span style='color:#fff'>C</span><span style='color:#fff'>s</span><span style='color:#fff'>·</span></div>
<div class='abs' style='left:1489.0px;top:1258.26px;width:601.9px;height:26.68px;background:#268494'></div>
<div class='abs' style='left:2127.8px;top:1258.26px;width:214.2px;height:26.68px;background:#268494'></div>
<div class='hrow mono' style='left:1415.8px;top:1258.26px;color:#4d4d4d'>0070</div>
<div class='hrow mono' style='left:1490.8px;top:1258.26px;color:#fff'>9b 58 89 28 68 77 6e 36  7f 65 a5 9a 32 2c f1 42</div>
<div class='hrow mono' style='left:2128.0px;top:1258.26px'><span style='color:#fff'>·</span><span style='color:#fff'>X</span><span style='color:#fff'>·</span><span style='color:#fff'>(</span><span style='color:#fff'>h</span><span style='color:#fff'>w</span><span style='color:#fff'>n</span><span style='color:#fff'>6</span> <span style='color:#fff'>·</span><span style='color:#fff'>e</span><span style='color:#fff'>·</span><span style='color:#fff'>·</span><span style='color:#fff'>2</span><span style='color:#fff'>,</span><span style='color:#fff'>·</span><span style='color:#fff'>B</span></div>
<div class='abs' style='left:1489.0px;top:1284.54px;width:601.9px;height:26.68px;background:#268494'></div>
<div class='abs' style='left:2127.8px;top:1284.54px;width:214.2px;height:26.68px;background:#268494'></div>
<div class='hrow mono' style='left:1415.8px;top:1284.54px;color:#4d4d4d'>0080</div>
<div class='hrow mono' style='left:1490.8px;top:1284.54px;color:#fff'>dd 8b 39 c7 e0 fb 4e ca  12 90 04 95 dd 7f fe ee</div>
<div class='hrow mono' style='left:2128.0px;top:1284.54px'><span style='color:#fff'>·</span><span style='color:#fff'>·</span><span style='color:#fff'>9</span><span style='color:#fff'>·</span><span style='color:#fff'>·</span><span style='color:#fff'>·</span><span style='color:#fff'>N</span><span style='color:#fff'>·</span> <span style='color:#fff'>·</span><span style='color:#fff'>·</span><span style='color:#fff'>·</span><span style='color:#fff'>·</span><span style='color:#fff'>·</span><span style='color:#fff'>·</span><span style='color:#fff'>·</span><span style='color:#fff'>·</span></div>
<div class='abs' style='left:1489.0px;top:1310.82px;width:601.9px;height:26.68px;background:#268494'></div>
<div class='abs' style='left:2127.8px;top:1310.82px;width:214.2px;height:26.68px;background:#268494'></div>
<div class='hrow mono' style='left:1415.8px;top:1310.82px;color:#4d4d4d'>0090</div>
<div class='hrow mono' style='left:1490.8px;top:1310.82px;color:#fff'>d1 c3 24 f8 18 fb 96 59  b4 db b3 c4 ae d4 18 f3</div>
<div class='hrow mono' style='left:2128.0px;top:1310.82px'><span style='color:#fff'>·</span><span style='color:#fff'>·</span><span style='color:#fff'>$</span><span style='color:#fff'>·</span><span style='color:#fff'>·</span><span style='color:#fff'>·</span><span style='color:#fff'>·</span><span style='color:#fff'>Y</span> <span style='color:#fff'>·</span><span style='color:#fff'>·</span><span style='color:#fff'>·</span><span style='color:#fff'>·</span><span style='color:#fff'>·</span><span style='color:#fff'>·</span><span style='color:#fff'>·</span><span style='color:#fff'>·</span></div>
<div class='abs' style='left:1489.0px;top:1337.10px;width:601.9px;height:26.68px;background:#268494'></div>
<div class='abs' style='left:2127.8px;top:1337.10px;width:214.2px;height:26.68px;background:#268494'></div>
<div class='hrow mono' style='left:1415.8px;top:1337.10px;color:#4d4d4d'>00a0</div>
<div class='hrow mono' style='left:1490.8px;top:1337.10px;color:#fff'>32 fb 2b 36 cf 1b a9 d1  96 fa fa 55 36 3b 23 85</div>
<div class='hrow mono' style='left:2128.0px;top:1337.10px'><span style='color:#fff'>2</span><span style='color:#fff'>·</span><span style='color:#fff'>+</span><span style='color:#fff'>6</span><span style='color:#fff'>·</span><span style='color:#fff'>·</span><span style='color:#fff'>·</span><span style='color:#fff'>·</span> <span style='color:#fff'>·</span><span style='color:#fff'>·</span><span style='color:#fff'>·</span><span style='color:#fff'>U</span><span style='color:#fff'>6</span><span style='color:#fff'>;</span><span style='color:#fff'>#</span><span style='color:#fff'>·</span></div>
<div class='abs' style='left:1489.0px;top:1363.38px;width:601.9px;height:26.68px;background:#268494'></div>
<div class='abs' style='left:2127.8px;top:1363.38px;width:214.2px;height:26.68px;background:#268494'></div>
<div class='hrow mono' style='left:1415.8px;top:1363.38px;color:#4d4d4d'>00b0</div>
<div class='hrow mono' style='left:1490.8px;top:1363.38px;color:#fff'>18 2f 2c c5 5d aa 72 7a  84 4a 96 d1 b3 c1 66 bc</div>
<div class='hrow mono' style='left:2128.0px;top:1363.38px'><span style='color:#fff'>·</span><span style='color:#fff'>/</span><span style='color:#fff'>,</span><span style='color:#fff'>·</span><span style='color:#fff'>]</span><span style='color:#fff'>·</span><span style='color:#fff'>r</span><span style='color:#fff'>z</span> <span style='color:#fff'>·</span><span style='color:#fff'>J</span><span style='color:#fff'>·</span><span style='color:#fff'>·</span><span style='color:#fff'>·</span><span style='color:#fff'>·</span><span style='color:#fff'>f</span><span style='color:#fff'>·</span></div>
<div class='abs' style='left:1489.0px;top:1389.66px;width:601.9px;height:26.68px;background:#268494'></div>
<div class='abs' style='left:2127.8px;top:1389.66px;width:214.2px;height:26.68px;background:#268494'></div>
<div class='hrow mono' style='left:1415.8px;top:1389.66px;color:#4d4d4d'>00c0</div>
<div class='hrow mono' style='left:1490.8px;top:1389.66px;color:#fff'>eb 35 66 f3 e0 de 37 0d  3c 2a 3d 10 79 ba e9 dd</div>
<div class='hrow mono' style='left:2128.0px;top:1389.66px'><span style='color:#fff'>·</span><span style='color:#fff'>5</span><span style='color:#fff'>f</span><span style='color:#fff'>·</span><span style='color:#fff'>·</span><span style='color:#fff'>·</span><span style='color:#fff'>7</span><span style='color:#fff'>·</span> <span style='color:#fff'>&lt;</span><span style='color:#fff'>*</span><span style='color:#fff'>=</span><span style='color:#fff'>·</span><span style='color:#fff'>y</span><span style='color:#fff'>·</span><span style='color:#fff'>·</span><span style='color:#fff'>·</span></div>
<div class='abs' style='left:1489.0px;top:1415.94px;width:601.9px;height:26.68px;background:#268494'></div>
<div class='abs' style='left:2127.8px;top:1415.94px;width:214.2px;height:26.68px;background:#268494'></div>
<div class='hrow mono' style='left:1415.8px;top:1415.94px;color:#4d4d4d'>00d0</div>
<div class='hrow mono' style='left:1490.8px;top:1415.94px;color:#fff'>cc 6d ce 1d a7 e9 36 3b  1c 40 29 5e 79 87 1e ac</div>
<div class='hrow mono' style='left:2128.0px;top:1415.94px'><span style='color:#fff'>·</span><span style='color:#fff'>m</span><span style='color:#fff'>·</span><span style='color:#fff'>·</span><span style='color:#fff'>·</span><span style='color:#fff'>·</span><span style='color:#fff'>6</span><span style='color:#fff'>;</span> <span style='color:#fff'>·</span><span style='color:#fff'>@</span><span style='color:#fff'>)</span><span style='color:#fff'>^</span><span style='color:#fff'>y</span><span style='color:#fff'>·</span><span style='color:#fff'>·</span><span style='color:#fff'>·</span></div>
<div class='abs' style='left:1489.0px;top:1442.22px;width:601.9px;height:26.68px;background:#268494'></div>
<div class='abs' style='left:2127.8px;top:1442.22px;width:214.2px;height:26.68px;background:#268494'></div>
<div class='hrow mono' style='left:1415.8px;top:1442.22px;color:#4d4d4d'>00e0</div>
<div class='hrow mono' style='left:1490.8px;top:1442.22px;color:#fff'>1e d5 bb 7e b5 d7 d2 18  58 25 d3 6a 48 6c c8 84</div>
<div class='hrow mono' style='left:2128.0px;top:1442.22px'><span style='color:#fff'>·</span><span style='color:#fff'>·</span><span style='color:#fff'>·</span><span style='color:#fff'>~</span><span style='color:#fff'>·</span><span style='color:#fff'>·</span><span style='color:#fff'>·</span><span style='color:#fff'>·</span> <span style='color:#fff'>X</span><span style='color:#fff'>%</span><span style='color:#fff'>·</span><span style='color:#fff'>j</span><span style='color:#fff'>H</span><span style='color:#fff'>l</span><span style='color:#fff'>·</span><span style='color:#fff'>·</span></div>
<div class='abs' style='left:1489.0px;top:1468.50px;width:601.9px;height:26.68px;background:#268494'></div>
<div class='abs' style='left:2127.8px;top:1468.50px;width:214.2px;height:26.68px;background:#268494'></div>
<div class='hrow mono' style='left:1415.8px;top:1468.50px;color:#4d4d4d'>00f0</div>
<div class='hrow mono' style='left:1490.8px;top:1468.50px;color:#fff'>d1 05 ef df d1 7f 75 bf  43 6f a1 0f 22 b5 05 b5</div>
<div class='hrow mono' style='left:2128.0px;top:1468.50px'><span style='color:#fff'>·</span><span style='color:#fff'>·</span><span style='color:#fff'>·</span><span style='color:#fff'>·</span><span style='color:#fff'>·</span><span style='color:#fff'>·</span><span style='color:#fff'>u</span><span style='color:#fff'>·</span> <span style='color:#fff'>C</span><span style='color:#fff'>o</span><span style='color:#fff'>·</span><span style='color:#fff'>·</span><span style='color:#fff'>"</span><span style='color:#fff'>·</span><span style='color:#fff'>·</span><span style='color:#fff'>·</span></div>
<div class='abs' style='left:1489.0px;top:1494.78px;width:601.9px;height:26.68px;background:#268494'></div>
<div class='abs' style='left:2127.8px;top:1494.78px;width:214.2px;height:26.68px;background:#268494'></div>
<div class='hrow mono' style='left:1415.8px;top:1494.78px;color:#4d4d4d'>0100</div>
<div class='hrow mono' style='left:1490.8px;top:1494.78px;color:#fff'>b4 dd b7 7a e2 8a 20 bd  29 c2 77 ec 0f 46 09 98</div>
<div class='hrow mono' style='left:2128.0px;top:1494.78px'><span style='color:#fff'>·</span><span style='color:#fff'>·</span><span style='color:#fff'>·</span><span style='color:#fff'>z</span><span style='color:#fff'>·</span><span style='color:#fff'>·</span><span style='color:#fff'> </span><span style='color:#fff'>·</span> <span style='color:#fff'>)</span><span style='color:#fff'>·</span><span style='color:#fff'>w</span><span style='color:#fff'>·</span><span style='color:#fff'>·</span><span style='color:#fff'>F</span><span style='color:#fff'>·</span><span style='color:#fff'>·</span></div>
<div class='abs' style='left:1489.0px;top:1521.06px;width:601.9px;height:26.68px;background:#268494'></div>
<div class='abs' style='left:2127.8px;top:1521.06px;width:214.2px;height:26.68px;background:#268494'></div>
<div class='hrow mono' style='left:1415.8px;top:1521.06px;color:#4d4d4d'>0110</div>
<div class='hrow mono' style='left:1490.8px;top:1521.06px;color:#fff'>9e 32 20 8e 17 84 27 4c  20 2c dc 49 b9 ad c5 cd</div>
<div class='hrow mono' style='left:2128.0px;top:1521.06px'><span style='color:#fff'>·</span><span style='color:#fff'>2</span><span style='color:#fff'> </span><span style='color:#fff'>·</span><span style='color:#fff'>·</span><span style='color:#fff'>·</span><span style='color:#fff'>'</span><span style='color:#fff'>L</span> <span style='color:#fff'> </span><span style='color:#fff'>,</span><span style='color:#fff'>·</span><span style='color:#fff'>I</span><span style='color:#fff'>·</span><span style='color:#fff'>·</span><span style='color:#fff'>·</span><span style='color:#fff'>·</span></div>
<div class='abs' style='left:1489.0px;top:1547.34px;width:601.9px;height:26.68px;background:#268494'></div>
<div class='abs' style='left:2127.8px;top:1547.34px;width:214.2px;height:26.68px;background:#268494'></div>
<div class='hrow mono' style='left:1415.8px;top:1547.34px;color:#4d4d4d'>0120</div>
<div class='hrow mono' style='left:1490.8px;top:1547.34px;color:#fff'>06 29 af 8d b5 f9 5c 3d  2b a3 2d ab 24 57 42 43</div>
<div class='hrow mono' style='left:2128.0px;top:1547.34px'><span style='color:#fff'>·</span><span style='color:#fff'>)</span><span style='color:#fff'>·</span><span style='color:#fff'>·</span><span style='color:#fff'>·</span><span style='color:#fff'>·</span><span style='color:#fff'>\</span><span style='color:#fff'>=</span> <span style='color:#fff'>+</span><span style='color:#fff'>·</span><span style='color:#fff'>-</span><span style='color:#fff'>·</span><span style='color:#fff'>$</span><span style='color:#fff'>W</span><span style='color:#fff'>B</span><span style='color:#fff'>C</span></div>
<div class='abs' style='left:1489.0px;top:1573.62px;width:601.9px;height:26.68px;background:#268494'></div>
<div class='abs' style='left:2127.8px;top:1573.62px;width:214.2px;height:26.68px;background:#268494'></div>
<div class='hrow mono' style='left:1415.8px;top:1573.62px;color:#4d4d4d'>0130</div>
<div class='hrow mono' style='left:1490.8px;top:1573.62px;color:#fff'>71 39 84 23 86 5f d9 45  5a 7f 73 4b ce 0a 26 46</div>
<div class='hrow mono' style='left:2128.0px;top:1573.62px'><span style='color:#fff'>q</span><span style='color:#fff'>9</span><span style='color:#fff'>·</span><span style='color:#fff'>#</span><span style='color:#fff'>·</span><span style='color:#fff'>_</span><span style='color:#fff'>·</span><span style='color:#fff'>E</span> <span style='color:#fff'>Z</span><span style='color:#fff'>·</span><span style='color:#fff'>s</span><span style='color:#fff'>K</span><span style='color:#fff'>·</span><span style='color:#fff'>·</span><span style='color:#fff'>&amp;</span><span style='color:#fff'>F</span></div>
<div class='abs' style='left:1749.7px;top:1521.6px;width:28.6px;height:26.3px;border:1px solid #1b5e6b'></div>
<div class='abs' style='left:2212.9px;top:1521.6px;width:14.5px;height:26.3px;border:1px solid #1b5e6b'></div>
</body></html>
